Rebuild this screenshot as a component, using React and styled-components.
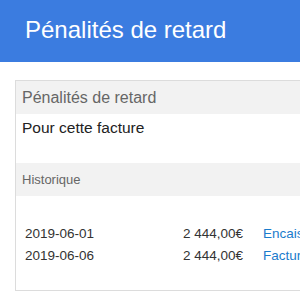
import React from 'react';
import styled, { createGlobalStyle } from 'styled-components';

const GlobalStyle = createGlobalStyle`
  body {
    margin: 0;
    font-family: "Liberation Sans", Arial, sans-serif;
    background: #fff;
    overflow: hidden;
  }
`;

const rows = [
  { date: '2019-06-01', amount: '2 444,00€', label: 'Encaissement' },
  { date: '2019-06-06', amount: '2 444,00€', label: 'Facture' },
];

export default function App() {
  return (
    <Page>
      <GlobalStyle />
      <TopBar>
        <PageTitle>Pénalités de retard</PageTitle>
      </TopBar>
      <Panel>
        <PanelHeader>Pénalités de retard</PanelHeader>
        <PanelBody>Pour cette facture</PanelBody>
        <SectionHeader>Historique</SectionHeader>
        <HistoryTable>
          <tbody>
            {rows.map((r) => (
              <Row key={r.date}>
                <DateCell>{r.date}</DateCell>
                <AmountCell>{r.amount}</AmountCell>
                <LinkCell><a href="#">{r.label}</a></LinkCell>
              </Row>
            ))}
          </tbody>
        </HistoryTable>
      </Panel>
    </Page>
  );
}

const Page = styled.div`
  width: 500px;
`;

const TopBar = styled.header`
  height: 62px;
  background: #3b7ce0;
  display: flex;
  align-items: center;
  padding-left: 25px;
`;

const PageTitle = styled.h1`
  margin: 0 0 3px 0;
  font-size: 24px;
  font-weight: normal;
  color: #fff;
`;

const Panel = styled.section`
  margin: 18px 0 0 15px;
  width: 420px;
  border: 1px solid #dcdcdc;
  padding-bottom: 24px;
`;

const PanelHeader = styled.div`
  height: 33px;
  line-height: 33px;
  padding-left: 6px;
  background: #f2f2f2;
  font-size: 16px;
  color: #666;
`;

const PanelBody = styled.div`
  padding: 4px 6px 25px;
  line-height: 20px;
  font-size: 15.5px;
  color: #222;
`;

const SectionHeader = styled.div`
  height: 33px;
  line-height: 33px;
  padding-left: 6px;
  background: #f2f2f2;
  font-size: 13px;
  color: #666;
`;

const HistoryTable = styled.table`
  margin-top: 26px;
  border-collapse: collapse;
  font-size: 13.5px;
  color: #333;
`;

const Row = styled.tr`
  height: 22px;
`;

const DateCell = styled.td`
  padding: 0 0 0 9px;
  width: 120px;
`;

const AmountCell = styled.td`
  padding: 0;
  width: 98px;
  text-align: right;
`;

const LinkCell = styled.td`
  padding-left: 20px;
  a {
    color: #1a7ccc;
    text-decoration: none;
  }
`;
